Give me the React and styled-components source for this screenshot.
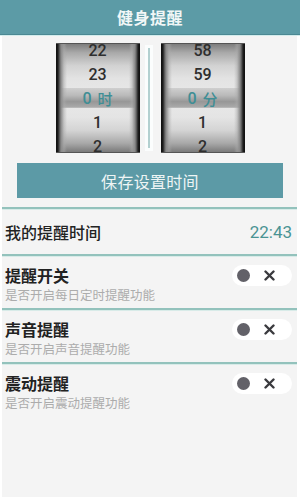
import React from "react";
import styled, { createGlobalStyle } from "styled-components";

const Global = createGlobalStyle`
  html, body { margin: 0; padding: 0; background: #ffffff; }
  body { font-family: "Noto Sans CJK SC", "Noto Sans", sans-serif; }
  * { box-sizing: border-box; }
`;

const Screen = styled.div`
  width: 300px;
  height: 500px;
  display: flex;
  flex-direction: column;
  background: #ffffff;
  overflow: hidden;
`;

const Header = styled.div`
  height: 35px;
  flex: none;
  display: flex;
  align-items: center;
  justify-content: center;
  background: #5c9ba6;
  border-bottom: 1px solid #4b8893;
  box-shadow: 0 1px 0 #d3ecec;
  color: #f2f7f7;
  font-size: 16px;
  font-weight: 700;
  letter-spacing: 0.5px;
`;

const Body = styled.div`
  flex: 1;
  margin: 1px 3px 3px 2px;
  background: #f4f4f4;
  display: flex;
  flex-direction: column;
`;

const PickerArea = styled.div`
  display: flex;
  justify-content: center;
  align-items: center;
  gap: 8px;
  padding-top: 7px;
  margin-left: 1px;
`;

const Wheel = styled.div`
  position: relative;
  width: 84px;
  height: 110px;
  overflow: hidden;
  display: flex;
  flex-direction: column;
  justify-content: center;
  border-top: 1px solid #555;
  border-bottom: 1px solid #555;
  background: linear-gradient(to bottom, #7d7d7d 0%, #a9a9a9 8%, #d2d2d2 20%, #e3e3e3 32%, #e9e9e9 50%, #e4e4e4 68%, #d4d4d4 80%, #a8a8a8 92%, #7a7a7a 100%);
  &::after {
    content: "";
    position: absolute;
    inset: 0;
    pointer-events: none;
    background: linear-gradient(to right, #0e0e0e 0px, #1e1e1e 2px, #4a4a4a 3px, #8a8a8a 5px, rgba(170,170,170,0.5) 8px, rgba(200,200,200,0) 11px, rgba(200,200,200,0) calc(100% - 11px), rgba(170,170,170,0.5) calc(100% - 8px), #8a8a8a calc(100% - 5px), #4a4a4a calc(100% - 3px), #1e1e1e calc(100% - 2px), #0e0e0e 100%);
  }
`;

const WheelItem = styled.div`
  flex: none;
  height: 24px;
  display: flex;
  align-items: center;
  justify-content: center;
  gap: 6px;
  font-family: Roboto, "Noto Sans CJK SC", sans-serif;
  font-size: 16px;
  font-weight: 500;
  color: ${(p) => (p.$selected ? "#3f8e95" : "#2e2e2e")};
  background: ${(p) =>
    p.$selected
      ? "linear-gradient(to bottom, transparent 0, transparent 2px, #cfcfcf 2px, #b9b9b9 40%, #979797 65%, #a9a9a9 calc(100% - 3px), #c6c6c6 calc(100% - 2px), transparent calc(100% - 2px))"
      : "transparent"};
`;

const Unit = styled.span`
  font-family: "Noto Sans CJK SC", sans-serif;
  font-size: 15px;
`;

const Divider = styled.div`
  width: 2px;
  height: 100px;
  background: #b3d0d0;
  box-shadow: 0 0 0 3px #fbfdfd;
  margin: 0 3px 0 0;
`;

const SaveButton = styled.div`
  margin: 10px 14px 0 15px;
  height: 35px;
  display: flex;
  align-items: center;
  justify-content: center;
  background: #5c9aa6;
  color: #eef5f5;
  font-size: 16px;
  letter-spacing: 0.3px;
`;

const Spacer = styled.div`
  height: ${(p) => p.$h}px;
  flex: none;
`;

const Sep = styled.div`
  height: 3px;
  flex: none;
  background: linear-gradient(to bottom, #93c2bc 0, #93c2bc 2px, #d8ebe8 2px);
`;

const TimeRow = styled.div`
  height: 44px;
  display: flex;
  align-items: center;
  justify-content: space-between;
  padding: 0 5px 0 3px;
`;

const TimeLabel = styled.div`
  font-size: 16px;
  font-weight: 500;
  color: #232323;
`;

const TimeValue = styled.div`
  font-family: Roboto, sans-serif;
  font-size: 17px;
  color: #4a9393;
`;

const SettingRow = styled.div`
  height: 51px;
  display: flex;
  justify-content: space-between;
  align-items: flex-start;
  padding: 8px 5px 0 3px;
`;

const Texts = styled.div`
  display: flex;
  flex-direction: column;
`;

const Title = styled.div`
  font-size: 16px;
  line-height: 20px;
  font-weight: 700;
  color: #222;
`;

const Sub = styled.div`
  margin-top: 2px;
  font-size: 12.5px;
  line-height: 16px;
  color: #acacac;
`;

const Pill = styled.div`
  margin-top: 0;
  width: 60px;
  height: 21px;
  border-radius: 11px;
  background: #ffffff;
  display: flex;
  align-items: center;
  padding-left: 5px;
  gap: 14px;
`;

const Knob = styled.div`
  width: 13px;
  height: 13px;
  border-radius: 50%;
  background: #626168;
`;

const Cross = () => (
  <svg width="11" height="11" viewBox="0 0 11 11">
    <path d="M1.5 1.5 L9.5 9.5 M9.5 1.5 L1.5 9.5" stroke="#3a3a3e" strokeWidth="2.4" strokeLinecap="round" />
  </svg>
);

const Picker = ({ items, unit }) => (
  <Wheel>
    {items.map((v, i) => (
      <WheelItem key={i} $selected={i === 2}>
        {v}
        {i === 2 && <Unit>{unit}</Unit>}
      </WheelItem>
    ))}
  </Wheel>
);

const Setting = ({ title, sub, last }) => (
  <>
    <SettingRow>
      <Texts>
        <Title>{title}</Title>
        <Sub>{sub}</Sub>
      </Texts>
      <Pill>
        <Knob />
        <Cross />
      </Pill>
    </SettingRow>
    {!last && <Sep />}
  </>
);

export default function App() {
  return (
    <Screen>
      <Global />
      <Header>健身提醒</Header>
      <Body>
        <PickerArea>
          <Picker items={["22", "23", "0", "1", "2"]} unit="时" />
          <Divider />
          <Picker items={["58", "59", "0", "1", "2"]} unit="分" />
        </PickerArea>
        <SaveButton>保存设置时间</SaveButton>
        <Spacer $h={9} />
        <Sep />
        <TimeRow>
          <TimeLabel>我的提醒时间</TimeLabel>
          <TimeValue>22:43</TimeValue>
        </TimeRow>
        <Sep />
        <Setting title="提醒开关" sub="是否开启每日定时提醒功能" />
        <Setting title="声音提醒" sub="是否开启声音提醒功能" />
        <Setting title="震动提醒" sub="是否开启震动提醒功能" last />
      </Body>
    </Screen>
  );
}
